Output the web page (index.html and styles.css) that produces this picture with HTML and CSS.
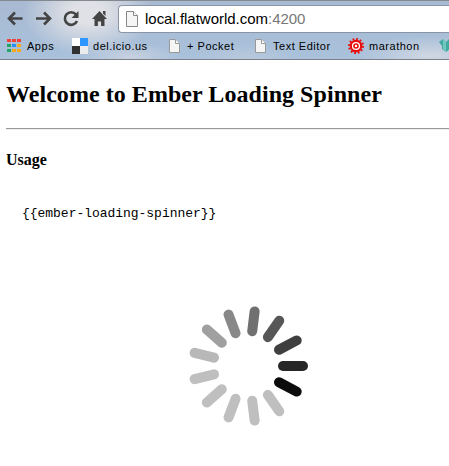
FILE: index.html
```
<!DOCTYPE html>
<html lang="en">
<head>
<meta charset="utf-8">
<title>Ember Loading Spinner</title>
<link rel="stylesheet" href="styles.css">
</head>
<body>
<header class="chrome">
  <div class="toolbar">
    <svg class="nav" width="112" height="30" viewBox="0 0 112 30" fill="none" stroke="#444" stroke-width="2.6">
      <path d="M22.5 13.5H9.5M15 7.5l-6 6 6 6M36 13.5h13.5M44 7.5l6 6-6 6"/>
      <path d="M76 9.5A6.3 6.3 0 1 0 77 16"/>
      <path d="M78.5 6v7H71.5z" fill="#444" stroke="none"/>
      <path d="M99.5 6l7.5 8h-2.5v7h-3.4v-4.5h-3.2V21h-3.4v-7H92zM103 6h2.5v5L103 8.5z" fill="#444" stroke="none"/>
    </svg>
    <div class="address">
      <svg class="page-icon" width="12" height="16" viewBox="0 0 12 16"><path d="M.5.5h7l4 4v11H.5z" fill="#f5f5f5" stroke="#888"/><path d="M7.5.5v4h4" fill="#fff" stroke="#888"/></svg>
      <span class="url">local.flatworld.com<span class="port">:4200</span></span>
    </div>
  </div>
  <nav class="bookmarks">
    <a class="bookmark apps"><svg width="14" height="14" viewBox="0 0 14 14"><path d="M0 0h4v3H0zM5 0h4v3H5zM10 0h4v3h-4z" fill="#ef4136"/><path d="M0 5h4v3H0z" fill="#23a566"/><path d="M5 5h4v3H5z" fill="#288df5"/><path d="M10 5h4v3h-4zM5 10h4v3H5zM10 10h4v3h-4z" fill="#f6ac18"/><path d="M0 10h4v3H0z" fill="#23a566"/></svg><span>Apps</span></a>
    <a class="bookmark delicious"><svg width="16" height="16"><path d="M0 0h8v8H0z" fill="#fff"/><path d="M8 0h8v8H8z" fill="#2d96ff"/><path d="M0 8h8v8H0z" fill="#303030"/><path d="M8 8h8v8H8z" fill="#ececec"/></svg><span>del.icio.us</span></a>
    <a class="bookmark pocket"><svg width="11" height="14"><path d="M.5.5h6l4 4v9H.5z" fill="#f5f5f5" stroke="#999"/><path d="M6.5.5v4h4" fill="#fff" stroke="#999"/></svg><span>+ Pocket</span></a>
    <a class="bookmark editor"><svg width="11" height="14"><path d="M.5.5h6l4 4v9H.5z" fill="#f5f5f5" stroke="#999"/><path d="M6.5.5v4h4" fill="#fff" stroke="#999"/></svg><span>Text Editor</span></a>
    <a class="bookmark marathon"><svg width="16" height="16" viewBox="0 0 16 16" fill="none" stroke="#e90c0c"><circle cx="8" cy="8" r="7" stroke-width="2" stroke-dasharray="1.75 1.915"/><circle cx="8" cy="8" r="5.2" fill="#fff" stroke-width="2.2"/><circle cx="8" cy="8" r="2" stroke-width="1.6"/></svg><span>marathon</span></a>
    <a class="bookmark shirt"><svg width="14" height="14"><path d="M0 3l4-3 3 3 3-3 4 3-3 4v3l-4 3-4-3V7z" fill="#42aaa5"/><path d="M4 0l3 3v10l-3-3z" fill="#70c9bc"/></svg></a>
  </nav>
</header>
<main>
  <h1>Welcome to Ember Loading Spinner</h1>
  <hr>
  <h2>Usage</h2>
  <pre>{{ember-loading-spinner}}</pre>
  <svg class="spinner" width="120" height="120" viewBox="-60 -60 120 120" stroke-width="10" stroke-linecap="round">
    <path d="M35 0H55" stroke="#262626"/>
    <path d="M35 0H55" stroke="#0c0c0c" transform="rotate(27.69)"/>
    <path d="M35 0H55" stroke="#bfbfbf" transform="rotate(55.38)"/>
    <path d="M35 0H55" stroke="#bfbfbf" transform="rotate(83.08)"/>
    <path d="M35 0H55" stroke="#bfbfbf" transform="rotate(110.77)"/>
    <path d="M35 0H55" stroke="#bfbfbf" transform="rotate(138.46)"/>
    <path d="M35 0H55" stroke="#bfbfbf" transform="rotate(166.15)"/>
    <path d="M35 0H55" stroke="#b8b8b8" transform="rotate(193.85)"/>
    <path d="M35 0H55" stroke="#a0a0a0" transform="rotate(221.54)"/>
    <path d="M35 0H55" stroke="#888" transform="rotate(249.23)"/>
    <path d="M35 0H55" stroke="#707070" transform="rotate(276.92)"/>
    <path d="M35 0H55" stroke="#575757" transform="rotate(304.62)"/>
    <path d="M35 0H55" stroke="#3f3f3f" transform="rotate(332.31)"/>
  </svg>
</main>
</body>
</html>
```
FILE: styles.css
```
* { box-sizing: border-box; }
body { margin: 0; height: 466px; overflow: hidden; background: #fff; color: #000; font-family: "Liberation Serif", serif; }
.chrome {
  height: 60px;
  overflow: hidden;
  border-top: 1px solid #84898f;
  border-bottom: 1px solid #7b8089;
  background:
    radial-gradient(ellipse 65px 42px at 88px 12px, #e0e1e6 25%, transparent 100%),
    radial-gradient(ellipse 50px 14px at 130px 56px, #c8d1df, transparent),
    radial-gradient(ellipse 55px 14px at 245px 57px, #b9c9dc, transparent),
    radial-gradient(ellipse 75px 20px at 430px 55px, #d0d7e2, transparent),
    linear-gradient(#a8bad2, #a9c1db);
  font-family: "Liberation Sans", sans-serif;
}
.toolbar { display: flex; height: 31px; padding-top: 4px; }
.nav { flex: none; margin-right: 6px; }
.address { display: flex; flex: 1; align-items: center; height: 28px; padding-left: 7px; border: 1px solid #8995a7; border-right: 0; border-radius: 4px 0 0 4px; background: #fff; }
.page-icon { margin-right: 7px; }
.url { font-size: 15px; line-height: 18px; white-space: nowrap; letter-spacing: -.02px; }
.port { color: #777; }
.bookmarks { display: flex; height: 27px; padding-left: 7px; }
.bookmark { display: flex; flex: none; align-items: center; font-size: 11px; letter-spacing: .52px; white-space: nowrap; }
.bookmark svg { flex: none; }
.bookmark span { line-height: 14px; }
.apps { width: 65px; gap: 6px; }
.delicious { width: 97px; gap: 5px; }
.pocket { width: 86px; gap: 7px; }
.editor { width: 93px; gap: 7px; }
.marathon { width: 91px; gap: 5px; }
main { padding-left: 6px; }
h1 { margin: 20px 0 0; font-size: 24px; line-height: 28px; white-space: nowrap; letter-spacing: .05px; }
hr { height: 2px; margin: 20px 0 0; border: 0; border-top: 1px solid #999; border-bottom: 1px solid #eee; }
h2 { margin: 21px 0 0; font-size: 16px; line-height: 18px; }
pre { margin: 37px 0 0 16px; font: 13px/16px "Liberation Mono", monospace; letter-spacing: -.03px; }
.spinner { display: block; margin: 84px 0 0 182px; }
```
